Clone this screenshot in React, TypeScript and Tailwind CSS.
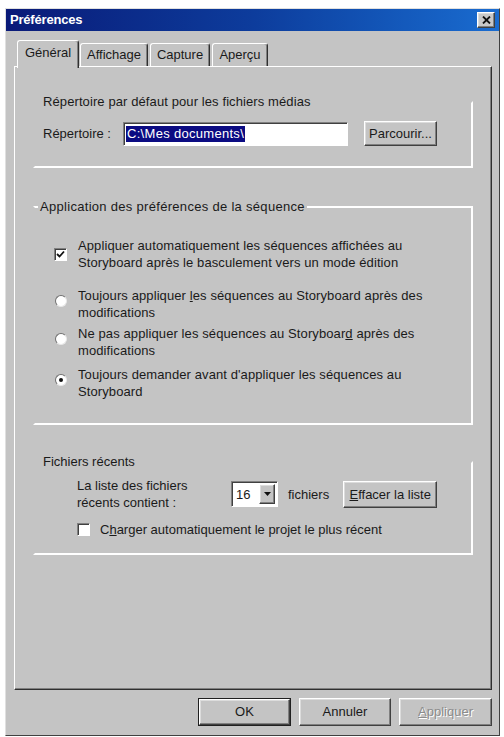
import React from 'react';

const font = "font-['Liberation_Sans',Arial,sans-serif]";

// raised 3D edge used by buttons and tabs
const raised =
  'border border-t-white border-l-white border-r-[#404040] border-b-[#404040] shadow-[inset_-1px_-1px_0_#808080,inset_1px_1px_0_#dcdcdc]';

// sunken edge used by text fields and check boxes
const sunken =
  'border border-t-[#808080] border-l-[#808080] border-r-white border-b-white shadow-[inset_1px_1px_0_#404040]';

const Button = ({
  children,
  className = '',
  disabled = false,
  isDefault = false,
}: {
  children: React.ReactNode;
  className?: string;
  disabled?: boolean;
  isDefault?: boolean;
}) => (
  <div className={`${isDefault ? 'border border-[#202020]' : ''} ${className}`}>
    <div
      className={`${raised} h-full w-full bg-[#c4c4c4] flex items-center justify-center text-[13px] ${
        disabled ? 'text-[#8c8c8c] [text-shadow:1px_1px_0_#ffffff]' : 'text-[#1a1a1a]'
      }`}
    >
      {children}
    </div>
  </div>
);

const Checkbox = ({ checked = false }: { checked?: boolean }) => (
  <div className={`${sunken} w-[13px] h-[13px] bg-white flex items-center justify-center shrink-0`}>
    {checked && (
      <svg width="9" height="9" viewBox="0 0 9 9">
        <polyline points="1,4 3.5,6.5 8,1.5" fill="none" stroke="#111" strokeWidth="1.8" />
      </svg>
    )}
  </div>
);

const Radio = ({ checked = false }: { checked?: boolean }) => (
  <div className="w-[12px] h-[12px] rounded-full bg-white border border-t-[#707070] border-l-[#707070] border-r-[#e8e8e8] border-b-[#e8e8e8] flex items-center justify-center shrink-0 mb-[6px]">
    {checked && <div className="w-[4px] h-[4px] rounded-full bg-[#111]" />}
  </div>
);

// etched frame: the dark half is lost against the face colour, only the light edge shows
const groupBox = 'border-2 border-r-white border-b-white border-l-[#c4c4c4]';

const Tab = ({
  label,
  width,
  active = false,
  className = '',
}: {
  label: string;
  width: string;
  active?: boolean;
  className?: string;
}) => (
  <div
    className={`${width} ${className} ${
      active ? 'h-[28px] -mb-[2px] relative z-10 pb-[4px]' : 'h-[23px]'
    } bg-[#c4c4c4] rounded-t-[3px] border border-b-0 border-t-white border-l-white border-r-[#303030] shadow-[inset_-1px_0_0_#808080] flex items-center justify-center text-[13px] text-[#1a1a1a]`}
  >
    {label}
  </div>
);

export default function App() {
  return (
    <div className={`${font} w-[504px] h-[737px] bg-white pt-[8px] pl-[5px] overflow-hidden`}>
      <div className="w-[495px] h-[728px] bg-[#c4c4c4] border border-t-[#e0e0e0] border-l-[#e0e0e0] border-r-[#404040] border-b-[#404040] flex flex-col">
        {/* title bar */}
        <div className="h-[22px] bg-gradient-to-r from-[#0a1a78] via-[#0d3c9c] to-[#1a6cd0] flex items-center justify-between pl-[4px] pr-[4px]">
          <span className="text-white font-bold text-[13px] tracking-[-0.2px]">Préférences</span>
          <div className={`${raised} w-[18px] h-[16px] bg-[#c8c8c8] flex items-center justify-center`}>
            <svg width="9" height="8" viewBox="0 0 9 8">
              <path d="M1 0.5 L8 7.5 M8 0.5 L1 7.5" stroke="#111" strokeWidth="1.8" />
            </svg>
          </div>
        </div>

        {/* tabs */}
        <div className="ml-[8px] mt-[9px] h-[26px] flex items-end pl-[3px]">
          <Tab label="Général" width="w-[62px]" active />
          <Tab label="Affichage" width="w-[68px]" className="ml-[1px]" />
          <Tab label="Capture" width="w-[60px]" className="ml-[2px]" />
          <Tab label="Aperçu" width="w-[56px]" className="ml-[2px]" />
        </div>

        {/* tab page */}
        <div className="ml-[8px] w-[478px] h-[624px] border border-t-white border-l-white border-r-[#303030] border-b-[#303030] shadow-[inset_-1px_-1px_0_#808080] px-[18px] text-[13px] text-[#1a1a1a] leading-[17px]">
          {/* default folder */}
          <fieldset className={`${groupBox} border-t-[#c4c4c4] mt-[27px] pl-[8px] pr-[8px] pb-[20px]`}>
            <legend className="-ml-[2px] px-[2px] leading-[16px] tracking-[0.1px]">Répertoire par défaut pour les fichiers médias</legend>
            <div className="mt-[11px] h-[25px] flex items-center">
              <span className="w-[80px]">Répertoire :</span>
              <div className={`${sunken} w-[225px] h-[24px] bg-white flex items-center pl-[2px]`}>
                <span className="bg-[#0b0b82] text-white px-[1px] leading-[16px] tracking-[0.3px]">C:\Mes documents\</span>
              </div>
              <Button className="ml-[16px] w-[73px] h-[25px]">Parcourir...</Button>
            </div>
          </fieldset>

          {/* storyboard preferences */}
          <fieldset className={`${groupBox} border-t-white border-b-[#cdcdcd] mt-[31px] pl-[19px] pr-[8px] pb-[23px]`}>
            <legend className="-ml-[16px] px-[2px] leading-[16px] tracking-[0.3px]">Application des préférences de la séquence</legend>
            <div className="mt-[22px] flex items-center">
              <div className="w-[24px]">
                <Checkbox checked />
              </div>
              <div className="tracking-[0.1px]">
                Appliquer automatiquement les séquences affichées au
                <br />
                Storyboard après le basculement vers un mode édition
              </div>
            </div>
            <div className="mt-[16px] flex items-center">
              <div className="w-[24px] pl-[1px]">
                <Radio />
              </div>
              <div className="tracking-[0.1px]">
                Toujours appliquer <u>l</u>es séquences au Storyboard après des
                <br />
                modifications
              </div>
            </div>
            <div className="mt-[4px] flex items-center">
              <div className="w-[24px] pl-[1px]">
                <Radio />
              </div>
              <div className="tracking-[0.1px]">
                Ne pas appliquer les séquences au Storyboar<u>d</u> après des
                <br />
                modifications
              </div>
            </div>
            <div className="mt-[7px] flex items-center">
              <div className="w-[24px] pl-[1px]">
                <Radio checked />
              </div>
              <div className="tracking-[0.1px]">
                Toujours demander avant d'appliquer les séquences au
                <br />
                Storyboard
              </div>
            </div>
          </fieldset>

          {/* recent files */}
          <fieldset className={`${groupBox} border-t-[#c4c4c4] mt-[29px] pl-[42px] pr-[8px] pb-[15px]`}>
            <legend className="-ml-[36px] px-[2px] leading-[16px]">Fichiers récents</legend>
            <div className="mt-[7px] h-[34px] flex items-center">
              <div className="w-[154px]">
                La liste des fichiers
                <br />
                récents contient :
              </div>
              <div className={`${sunken} w-[47px] h-[26px] bg-white flex items-center justify-between pl-[4px] pr-[2px]`}>
                <span>16</span>
                <div className={`${raised} w-[16px] h-[20px] bg-[#c4c4c4] flex items-center justify-center`}>
                  <svg width="7" height="4" viewBox="0 0 7 4">
                    <path d="M0 0 H7 L3.5 4 Z" fill="#111" />
                  </svg>
                </div>
              </div>
              <span className="ml-[10px]">fichiers</span>
              <Button className="ml-[14px] w-[94px] h-[27px]">
                <span>
                  <u>E</u>ffacer la liste
                </span>
              </Button>
            </div>
            <div className="mt-[10px] h-[17px] flex items-center">
              <Checkbox />
              <span className="ml-[10px]">
                C<u>h</u>arger automatiquement le projet le plus récent
              </span>
            </div>
          </fieldset>
        </div>

        {/* dialog buttons */}
        <div className="mt-[8px] h-[28px] flex justify-end pr-[7px] gap-[8px]">
          <Button isDefault className="w-[93px] h-[28px]">
            OK
          </Button>
          <Button className="w-[92px] h-[28px]">Annuler</Button>
          <Button disabled className="w-[93px] h-[28px]">
            <span>
              <u>A</u>ppliquer
            </span>
          </Button>
        </div>
      </div>
    </div>
  );
}
